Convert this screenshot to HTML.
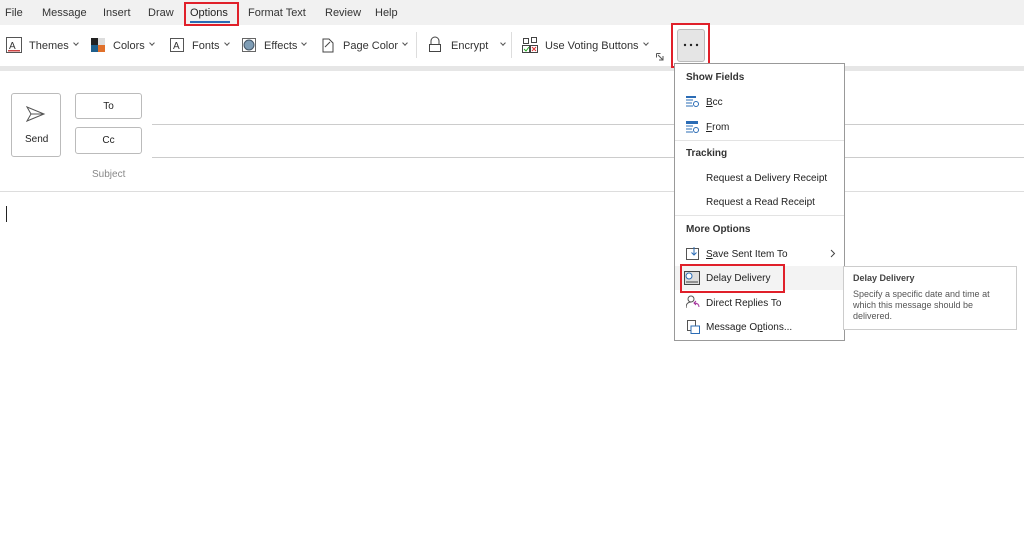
<!DOCTYPE html>
<html><head><meta charset="utf-8"><style>
*{margin:0;padding:0;box-sizing:border-box}
body{width:1024px;height:546px;overflow:hidden;background:#fff;font-family:"Liberation Sans",sans-serif;color:#222;position:relative;font-size:11px}
.a{position:absolute;white-space:nowrap}
.tab{top:7px;font-size:11px;color:#333}
.rb{top:40px;font-size:11px;color:#333}
.mi{font-size:10px;color:#222;left:706px}
.mh{font-size:10px;font-weight:bold;color:#333;left:686px}
.ic{position:absolute}
.cv{display:inline-block;width:6px;height:4px;margin-left:4px;vertical-align:2px;background:none;position:relative}
.cv:before{content:"";position:absolute;left:1px;top:-2px;width:3px;height:3px;border-right:1px solid #555;border-bottom:1px solid #555;transform:rotate(45deg)}
</style></head><body>
<div class="a" style="left:0;top:0;width:1024px;height:25px;background:#f1f1f1"></div>
<div class="a tab" style="left:5px">File</div>
<div class="a tab" style="left:42px">Message</div>
<div class="a tab" style="left:103px">Insert</div>
<div class="a tab" style="left:148px">Draw</div>
<div class="a tab" style="left:190px;color:#222">Options</div>
<div class="a" style="left:190px;top:21px;width:40px;height:2px;background:#2b6cb5"></div>
<div class="a" style="left:184px;top:2px;width:55px;height:24px;border:2px solid #e0202a"></div>
<div class="a tab" style="left:248px">Format Text</div>
<div class="a tab" style="left:325px">Review</div>
<div class="a tab" style="left:375px">Help</div>
<div class="a" style="left:0;top:66px;width:1024px;height:5px;background:#e6e6e6"></div>

<svg class="ic" style="left:6px;top:37px" width="16" height="16"><rect x="0.5" y="0.5" width="15" height="15" fill="#fff" stroke="#555"/><text x="3" y="12" font-size="10" fill="#333" font-family="Liberation Sans">A</text><rect x="2" y="13" width="12" height="1.5" fill="#c44"/></svg>
<div class="a rb" style="left:29px">Themes<span class="cv"></span></div>
<svg class="ic" style="left:91px;top:38px" width="14" height="14"><rect width="7" height="7" fill="#222"/><rect x="7" width="7" height="7" fill="#ddd"/><rect y="7" width="7" height="7" fill="#1f5f8b"/><rect x="7" y="7" width="7" height="7" fill="#e0702a"/></svg>
<div class="a rb" style="left:113px">Colors<span class="cv"></span></div>
<svg class="ic" style="left:170px;top:38px" width="14" height="14"><rect x="0.5" y="0.5" width="13" height="13" fill="#fff" stroke="#555"/><text x="3" y="11" font-size="10" fill="#333" font-family="Liberation Sans">A</text></svg>
<div class="a rb" style="left:192px">Fonts<span class="cv"></span></div>
<svg class="ic" style="left:242px;top:38px" width="14" height="14"><rect x="0.5" y="0.5" width="13" height="13" fill="#fff" stroke="#666"/><circle cx="7" cy="7" r="5" fill="#7f9db5" stroke="#456"/></svg>
<div class="a rb" style="left:264px">Effects<span class="cv"></span></div>
<svg class="ic" style="left:320px;top:37px" width="15" height="16"><path d="M3 2h6l4 4v9H3z" fill="none" stroke="#444"/><path d="M5 10l5-5" stroke="#444"/></svg>
<div class="a rb" style="left:343px">Page Color<span class="cv"></span></div>
<div class="a" style="left:416px;top:32px;width:1px;height:26px;background:#ddd"></div>
<svg class="ic" style="left:428px;top:36px" width="14" height="17"><path d="M3 8V5a4 4 0 0 1 8 0v3" fill="none" stroke="#444"/><rect x="1.5" y="8.5" width="11" height="7" fill="#fff" stroke="#444"/></svg>
<div class="a rb" style="left:451px">Encrypt<span class="cv" style="margin-left:12px"></span></div>
<div class="a" style="left:511px;top:32px;width:1px;height:26px;background:#ddd"></div>
<svg class="ic" style="left:522px;top:37px" width="16" height="16"><rect x="1.5" y="1.5" width="5" height="5" fill="none" stroke="#444"/><rect x="9.5" y="0.5" width="5" height="5" fill="none" stroke="#444"/><rect x="0.5" y="8.5" width="7" height="7" fill="none" stroke="#444"/><rect x="8.5" y="8.5" width="7" height="7" fill="none" stroke="#444"/><path d="M2 12l2 2 3-4" stroke="#2a2" fill="none"/><path d="M10 10l4 4M14 10l-4 4" stroke="#d33"/></svg>
<div class="a rb" style="left:545px">Use Voting Buttons<span class="cv"></span></div>
<svg class="ic" style="left:656px;top:53px" width="8" height="8"><path d="M0.5 0.5h4M0.5 0.5v4M2 2l5 5M7 3v4H3" fill="none" stroke="#555"/></svg>
<div class="a" style="left:677px;top:29px;width:28px;height:33px;background:#e5e5e5;border:1px solid #bbb;border-radius:3px"></div>
<svg class="ic" style="left:683px;top:43px" width="16" height="4"><circle cx="2" cy="2" r="1.2" fill="#222"/><circle cx="8" cy="2" r="1.2" fill="#222"/><circle cx="14" cy="2" r="1.2" fill="#222"/></svg>
<div class="a" style="left:671px;top:23px;width:39px;height:45px;border:2px solid #e0202a"></div>

<div class="a" style="left:11px;top:93px;width:50px;height:64px;border:1px solid #bbb;border-radius:3px"></div>
<svg class="ic" style="left:26px;top:106px" width="20" height="16"><path d="M1 1l17 7-17 7 4-7z M5 8h13" fill="none" stroke="#555"/></svg>
<div class="a" style="left:25px;top:134px;font-size:10px">Send</div>
<div class="a" style="left:75px;top:93px;width:67px;height:26px;border:1px solid #bbb;border-radius:3px;text-align:center;line-height:25px;font-size:10px">To</div>
<div class="a" style="left:75px;top:127px;width:67px;height:27px;border:1px solid #bbb;border-radius:3px;text-align:center;line-height:26px;font-size:10px">Cc</div>
<div class="a" style="left:152px;top:124px;width:872px;height:1px;background:#ccc"></div>
<div class="a" style="left:152px;top:157px;width:872px;height:1px;background:#ccc"></div>
<div class="a" style="left:92px;top:169px;font-size:10px;color:#888">Subject</div>
<div class="a" style="left:0;top:191px;width:1024px;height:1px;background:#ddd"></div>
<div class="a" style="left:6px;top:206px;width:1px;height:16px;background:#222"></div>

<div class="a" style="left:674px;top:63px;width:171px;height:278px;background:#fff;border:1px solid #999"></div>
<div class="a mh" style="top:72px">Show Fields</div>
<svg class="ic" style="left:686px;top:96px" width="14" height="13"><rect x="0" y="0" width="10" height="2" fill="#2b6cb5"/><path d="M0 4h7M0 7h6M0 10h7" stroke="#2b6cb5"/><circle cx="10" cy="8" r="2.5" fill="none" stroke="#2b6cb5"/></svg>
<div class="a mi" style="top:97px"><u>B</u>cc</div>
<svg class="ic" style="left:686px;top:121px" width="14" height="13"><rect x="0" y="0" width="12" height="3" fill="#2b6cb5"/><path d="M0 5h7M0 8h6M0 11h7" stroke="#2b6cb5"/><circle cx="10" cy="9" r="2.5" fill="none" stroke="#2b6cb5"/></svg>
<div class="a mi" style="top:122px"><u>F</u>rom</div>
<div class="a" style="left:675px;top:140px;width:169px;height:1px;background:#e3e3e3"></div>
<div class="a mh" style="top:148px">Tracking</div>
<div class="a mi" style="top:173px">Request a Delivery Receipt</div>
<div class="a mi" style="top:197px">Request a Read Receipt</div>
<div class="a" style="left:675px;top:215px;width:169px;height:1px;background:#e3e3e3"></div>
<div class="a mh" style="top:224px">More Options</div>
<svg class="ic" style="left:686px;top:247px" width="14" height="14"><rect x="0.5" y="1.5" width="12" height="11" fill="none" stroke="#555"/><path d="M8 0v8M5.5 5.5L8 8l2.5-2.5" fill="none" stroke="#2b6cb5"/></svg>
<div class="a mi" style="top:249px"><u>S</u>ave Sent Item To</div>
<svg class="ic" style="left:830px;top:249px" width="6" height="9"><path d="M1 1l3.5 3.5L1 8" fill="none" stroke="#444"/></svg>
<div class="a" style="left:675px;top:266px;width:169px;height:24px;background:#f3f3f3"></div>
<svg class="ic" style="left:684px;top:271px" width="16" height="14"><rect x="0.5" y="0.5" width="15" height="13" fill="#ddd" stroke="#444"/><circle cx="5" cy="5" r="3" fill="#fff" stroke="#2b6cb5"/><path d="M2 11h12" stroke="#444"/></svg>
<div class="a mi" style="top:273px">Delay Delivery</div>
<div class="a" style="left:680px;top:264px;width:105px;height:29px;border:2px solid #e0202a"></div>
<svg class="ic" style="left:686px;top:295px" width="14" height="15"><circle cx="5" cy="4" r="3" fill="none" stroke="#555"/><path d="M0 13c0-4 2-6 5-6" fill="none" stroke="#555"/><path d="M13 12c0-3-2-4-5-4M10 6l-2 2 2 2" fill="none" stroke="#a3309a"/></svg>
<div class="a mi" style="top:298px">Direct Replies To</div>
<svg class="ic" style="left:687px;top:320px" width="13" height="14"><rect x="0.5" y="0.5" width="8" height="10" fill="none" stroke="#555"/><rect x="4" y="6" width="8.5" height="7.5" fill="#fff" stroke="#2b6cb5"/></svg>
<div class="a mi" style="top:322px">Message O<u>p</u>tions...</div>

<div class="a" style="left:843px;top:266px;width:174px;height:64px;background:#fff;border:1px solid #ccc"></div>
<div class="a" style="left:853px;top:273px;font-size:9px;font-weight:bold;color:#444">Delay Delivery</div>
<div class="a" style="left:853px;top:289px;font-size:9px;color:#555;line-height:11px;white-space:normal;width:160px">Specify a specific date and time at which this message should be delivered.</div>
</body></html>
